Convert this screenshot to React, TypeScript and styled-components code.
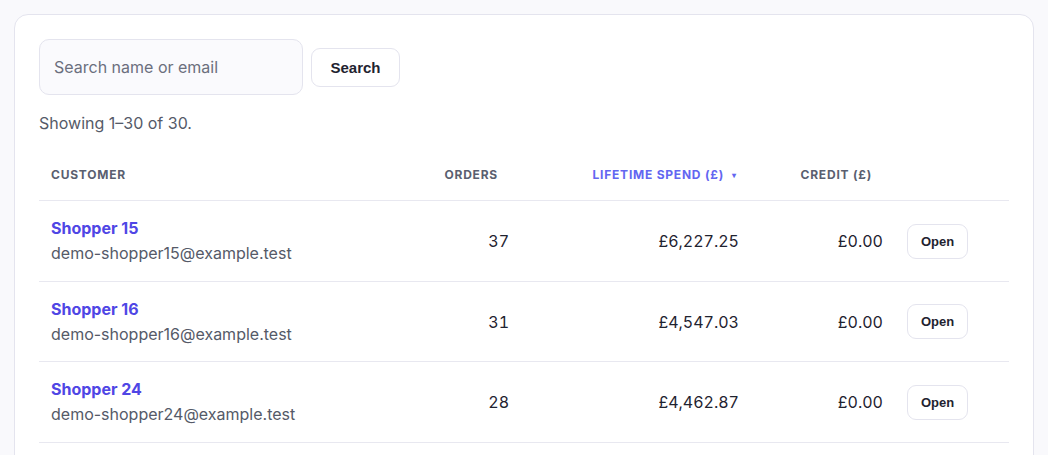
import React from 'react';
import styled, { createGlobalStyle } from 'styled-components';

const GlobalStyle = createGlobalStyle`
  * { box-sizing: border-box; }
  body {
    margin: 0;
    background: #f9f9fc;
    font-family: 'Inter', 'Noto Sans', sans-serif;
    color: #1f2330;
  }
`;

const Page = styled.div`
  padding: 14px;
`;

const Card = styled.section`
  background: #ffffff;
  border: 1px solid #e4e4ee;
  border-radius: 14px;
  padding: 24px;
`;

const SearchForm = styled.form`
  display: flex;
  align-items: center;
  gap: 8px;
`;

const SearchInput = styled.input`
  width: 264px;
  height: 56px;
  padding: 0 14px;
  border: 1px solid #e4e4ee;
  border-radius: 10px;
  background: #fafafd;
  font-family: 'Inter', sans-serif;
  font-size: 16px;
  color: #1f2330;
  outline: none;

  &::placeholder {
    color: #6b6f7d;
  }
`;

const Button = styled.button<{ $size?: 'sm' | 'md' }>`
  height: ${({ $size }) => ($size === 'sm' ? '35px' : '39px')};
  padding: ${({ $size }) => ($size === 'sm' ? '0 13px' : '0 18.5px')};
  border: 1px solid #e4e4ee;
  border-radius: 9px;
  background: #ffffff;
  font-family: 'Liberation Sans', Arial, sans-serif;
  font-weight: 700;
  font-size: ${({ $size }) => ($size === 'sm' ? '13px' : '15px')};
  color: #1f2330;
  cursor: pointer;
`;

const Summary = styled.p`
  margin: 16px 0 15px;
  font-size: 16px;
  line-height: 24px;
  color: #555a68;
`;

const columns = '1fr 100px 230px 144px 114px';

const HeadRow = styled.div`
  display: grid;
  grid-template-columns: ${columns};
  border-bottom: 1px solid #e8e8f0;
`;

const HeadCell = styled.div<{ $align?: 'left' | 'right'; $active?: boolean }>`
  padding: 18px 12px;
  line-height: 14px;
  font-size: 12px;
  font-weight: 700;
  letter-spacing: 0.065em;
  text-transform: uppercase;
  white-space: nowrap;
  text-align: ${({ $align }) => $align || 'left'};
  color: ${({ $active }) => ($active ? '#6366f1' : '#5a5f70')};
`;

const SortMark = styled.span<{ $visible?: boolean }>`
  display: inline-block;
  width: ${({ $visible }) => ($visible ? '15px' : '11px')};
  padding-right: ${({ $visible }) => ($visible ? '3px' : '0')};
  text-align: right;
  font-size: 8px;
  letter-spacing: 0;
  vertical-align: 1px;
  visibility: ${({ $visible }) => ($visible ? 'visible' : 'hidden')};
`;

const Row = styled.div`
  display: grid;
  grid-template-columns: ${columns};
  align-items: center;
  border-bottom: 1px solid #e8e8f0;
`;

const Cell = styled.div<{ $numeric?: boolean }>`
  padding: 16px 12px 15.5px;
  font-size: 16px;
  line-height: 24px;
  font-variant-numeric: ${({ $numeric }) => ($numeric ? 'tabular-nums' : 'normal')};
  text-align: ${({ $numeric }) => ($numeric ? 'right' : 'left')};
  color: #1f2330;
`;

const CustomerName = styled.a`
  display: block;
  font-weight: 700;
  line-height: 22px;
  margin-bottom: 2px;
  color: #4f46e5;
  text-decoration: none;
`;

const CustomerEmail = styled.div`
  color: #555a68;
`;

type Customer = {
  name: string;
  email: string;
  orders: number;
  spend: string;
  credit: string;
};

const customers: Customer[] = [
  { name: 'Shopper 15', email: 'demo-shopper15@example.test', orders: 37, spend: '£6,227.25', credit: '£0.00' },
  { name: 'Shopper 16', email: 'demo-shopper16@example.test', orders: 31, spend: '£4,547.03', credit: '£0.00' },
  { name: 'Shopper 24', email: 'demo-shopper24@example.test', orders: 28, spend: '£4,462.87', credit: '£0.00' },
  { name: 'Shopper 7', email: 'demo-shopper7@example.test', orders: 26, spend: '£4,108.40', credit: '£0.00' },
  { name: 'Shopper 3', email: 'demo-shopper3@example.test', orders: 24, spend: '£3,870.12', credit: '£0.00' },
];

const App = () => (
  <>
    <GlobalStyle />
    <Page>
      <Card>
        <SearchForm onSubmit={(e) => e.preventDefault()}>
          <SearchInput placeholder="Search name or email" />
          <Button type="submit">Search</Button>
        </SearchForm>
        <Summary>Showing 1–30 of 30.</Summary>
        <HeadRow>
          <HeadCell>Customer</HeadCell>
          <HeadCell $align="right">
            Orders<SortMark>▾</SortMark>
          </HeadCell>
          <HeadCell $align="right" $active>
            Lifetime spend (£)<SortMark $visible>▾</SortMark>
          </HeadCell>
          <HeadCell $align="right">
            Credit (£)<SortMark>▾</SortMark>
          </HeadCell>
          <HeadCell />
        </HeadRow>
        {customers.map((c) => (
          <Row key={c.email}>
            <Cell>
              <CustomerName href="#">{c.name}</CustomerName>
              <CustomerEmail>{c.email}</CustomerEmail>
            </Cell>
            <Cell $numeric>{c.orders}</Cell>
            <Cell $numeric>{c.spend}</Cell>
            <Cell $numeric>{c.credit}</Cell>
            <Cell>
              <Button type="button" $size="sm">Open</Button>
            </Cell>
          </Row>
        ))}
      </Card>
    </Page>
  </>
);

export default App;
